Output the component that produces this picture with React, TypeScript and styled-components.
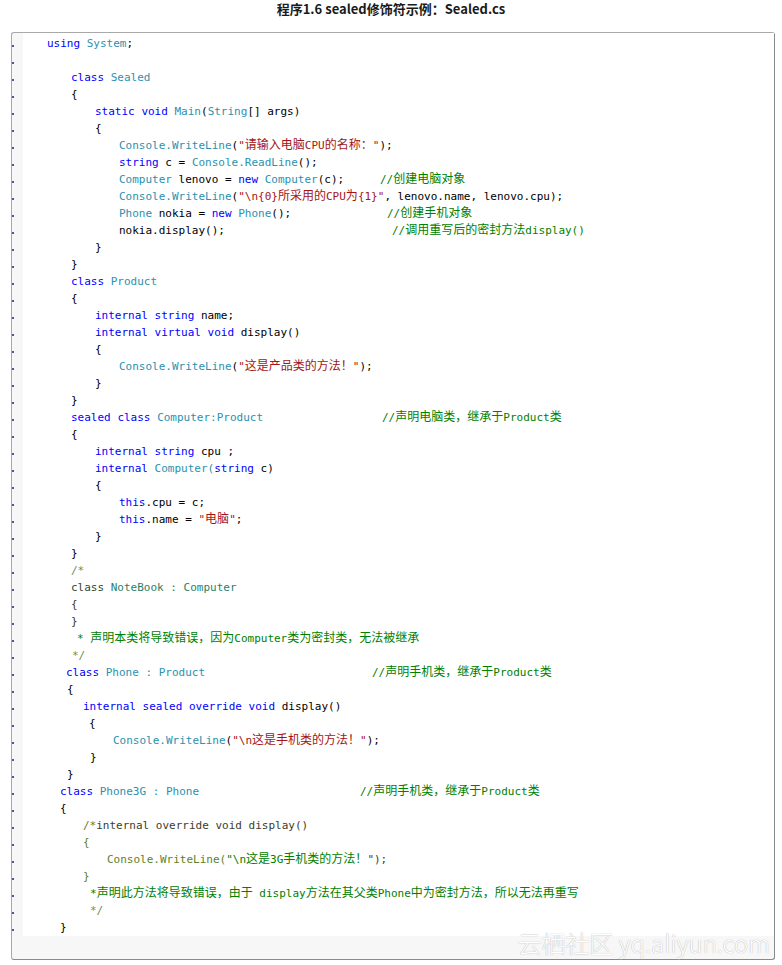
import React from "react";
import styled, { createGlobalStyle } from "styled-components";

const Global = createGlobalStyle`
  html, body { margin: 0; padding: 0; background: #ffffff; }
  body { font-family: "Noto Sans CJK SC", "Noto Sans", sans-serif; }
`;

type Kind = "kw" | "ty" | "st" | "cm" | "pl" | "ck" | "ct" | "cg" | "cd" | "co";

const COLORS: Record<Kind, string> = {
  kw: "#0000ff",
  ty: "#2b91af",
  st: "#a31515",
  cm: "#008000",
  pl: "#000000",
  ck: "#34452f",
  ct: "#2b7f66",
  cg: "#6f8f4f",
  cd: "#3c3c2c",
  co: "#5d7f2a",
};

type Tok = [string, Kind];
type LineDef = { i: number; t: Tok[]; c?: string; cx?: number };

const k = (s: string): Tok => [s, "kw"];
const t = (s: string): Tok => [s, "ty"];
const s = (x: string): Tok => [x, "st"];
const p = (x: string): Tok => [x, "pl"];
const g = (x: string): Tok => [x, "cm"];
const sp: Tok = [" ", "pl"];

const LINES: LineDef[] = [
  { i: 24, t: [k("using"), sp, t("System"), p(";")] },
  { i: 24, t: [] },
  { i: 48, t: [k("class"), sp, t("Sealed")] },
  { i: 48, t: [p("{")] },
  { i: 72, t: [k("static"), sp, k("void"), sp, t("Main"), p("("), t("String"), p("[] args)")] },
  { i: 72, t: [p("{")] },
  { i: 96, t: [t("Console.WriteLine"), p("("), s("\"请输入电脑CPU的名称：\""), p(");")] },
  { i: 96, t: [k("string"), p(" c = "), t("Console.ReadLine"), p("();")] },
  { i: 96, t: [t("Computer"), p(" lenovo = "), k("new"), sp, t("Computer"), p("(c);")], c: "//创建电脑对象", cx: 357 },
  { i: 96, t: [t("Console.WriteLine"), p("("), s("\"\\n{0}所采用的CPU为{1}\""), p(", lenovo.name, lenovo.cpu);")] },
  { i: 96, t: [t("Phone"), p(" nokia = "), k("new"), sp, t("Phone"), p("();")], c: "//创建手机对象", cx: 364 },
  { i: 96, t: [p("nokia.display();")], c: "//调用重写后的密封方法display()", cx: 369 },
  { i: 72, t: [p("}")] },
  { i: 48, t: [p("}")] },
  { i: 48, t: [k("class"), sp, t("Product")] },
  { i: 48, t: [p("{")] },
  { i: 72, t: [k("internal"), sp, k("string"), p(" name;")] },
  { i: 72, t: [k("internal"), sp, k("virtual"), sp, k("void"), p(" display()")] },
  { i: 72, t: [p("{")] },
  { i: 96, t: [t("Console.WriteLine"), p("("), s("\"这是产品类的方法！\""), p(");")] },
  { i: 72, t: [p("}")] },
  { i: 48, t: [p("}")] },
  { i: 48, t: [k("sealed"), sp, k("class"), sp, t("Computer:Product")], c: "//声明电脑类，继承于Product类", cx: 359 },
  { i: 48, t: [p("{")] },
  { i: 72, t: [k("internal"), sp, k("string"), p(" cpu ;")] },
  { i: 72, t: [k("internal"), sp, t("Computer("), k("string"), p(" c)")] },
  { i: 72, t: [p("{")] },
  { i: 96, t: [k("this"), p(".cpu = c;")] },
  { i: 96, t: [k("this"), p(".name = "), s("\"电脑\""), p(";")] },
  { i: 72, t: [p("}")] },
  { i: 48, t: [p("}")] },
  { i: 48, t: [["/*", "cg"]] },
  { i: 48, t: [["class", "ck"], [" NoteBook : Computer", "ct"]] },
  { i: 48, t: [["{", "cd"]] },
  { i: 48, t: [["}", "cd"]] },
  { i: 54, t: [g("* 声明本类将导致错误，因为Computer类为密封类，无法被继承")] },
  { i: 49, t: [["*/", "cg"]] },
  { i: 43, t: [k("class"), sp, t("Phone : Product")], c: "//声明手机类，继承于Product类", cx: 349 },
  { i: 44, t: [p("{")] },
  { i: 60, t: [k("internal"), sp, k("sealed"), sp, k("override"), sp, k("void"), p(" display()")] },
  { i: 66, t: [p("{")] },
  { i: 90, t: [t("Console.WriteLine"), p("("), s("\"\\n这是手机类的方法！\""), p(");")] },
  { i: 67, t: [p("}")] },
  { i: 44, t: [p("}")] },
  { i: 37, t: [k("class"), sp, t("Phone3G : Phone")], c: "//声明手机类，继承于Product类", cx: 337 },
  { i: 37, t: [p("{")] },
  { i: 60, t: [["/*", "co"], ["internal override void display()", "cd"]] },
  { i: 60, t: [["{", "co"]] },
  { i: 84, t: [["Console.WriteLine(", "co"], ["\"\\n这是3G手机类的方法！", "cm"], ["\");", "cd"]] },
  { i: 60, t: [["}", "co"]] },
  { i: 67, t: [g("*声明此方法将导致错误，由于 display方法在其父类Phone中为密封方法，所以无法再重写")] },
  { i: 67, t: [["*/", "cg"]] },
  { i: 37, t: [p("}")] },
];

const Page = styled.div`
  width: 782px;
`;

const Title = styled.h1`
  margin: 0 0 16px;
  padding-top: 1px;
  height: 15px;
  font-family: "Noto Sans CJK SC", "Noto Sans", sans-serif;
  font-size: 13px;
  line-height: 15px;
  font-weight: 700;
  color: #1a1a1a;
  text-align: center;
`;

const Box = styled.div`
  position: relative;
  margin-left: 11px;
  width: 764px;
  box-sizing: border-box;
  display: flex;
  padding-bottom: 23px;
  background: #f7f7f7;
  border: 1px solid #a9a9a9;
  border-right-color: #8a8a8a;
  border-bottom-color: #8a8a8a;
  border-radius: 3px;
`;

const Gutter = styled.div`
  width: 11px;
  flex-shrink: 0;
  padding-top: 2px;
  display: flex;
  flex-direction: column;
`;

const DotRow = styled.div`
  height: 17px;
  position: relative;
  &::after {
    content: "";
    position: absolute;
    left: 0;
    top: 10px;
    width: 2px;
    height: 2px;
    background: #4a5a8e;
  }
`;

const Panel = styled.div`
  flex: 1;
  background: #ffffff;
  padding-top: 2px;
`;

const Line = styled.div<{ $indent: number }>`
  height: 17px;
  padding-left: ${(pr) => pr.$indent}px;
  white-space: pre;
  font-family: "DejaVu Sans Mono", "Liberation Mono", monospace;
  font-size: 11px;
  line-height: 17px;
  display: flex;
  align-items: baseline;
`;

const Seg = styled.span<{ $w?: number }>`
  display: inline-block;
  flex-shrink: 0;
  height: 17px;
  ${(pr) => (pr.$w !== undefined ? `width: ${pr.$w}px;` : "")}
`;

const Tk = styled.span<{ $kind: Kind }>`
  color: ${(pr) => COLORS[pr.$kind]};
`;

const Han = styled.span`
  font-family: "Noto Sans CJK SC", sans-serif;
  font-size: 12px;
  line-height: 11px;
`;

const Watermark = styled.div`
  position: absolute;
  right: 4px;
  bottom: 1px;
  font-family: "Noto Sans CJK SC", "Liberation Sans", sans-serif;
  font-size: 24px;
  line-height: 30px;
  font-weight: 300;
  color: #ffffff;
  text-shadow: 0 0 1px #b8b8b8, 0 0 1px #c8c8c8;
  white-space: nowrap;
  pointer-events: none;
`;

const CJK = /([\u3000-\u303f\u4e00-\u9fff\uff00-\uffef]+)/;

function renderText(text: string) {
  return text.split(CJK).map((part, idx) =>
    part === "" ? null : CJK.test(part) ? <Han key={idx}>{part}</Han> : <React.Fragment key={idx}>{part}</React.Fragment>
  );
}

function CodeLine({ def }: { def: LineDef }) {
  const toks = def.t.map(([txt, kind], idx) => (
    <Tk key={idx} $kind={kind}>
      {renderText(txt)}
    </Tk>
  ));
  return (
    <Line $indent={def.i}>
      {def.c ? (
        <>
          <Seg $w={(def.cx ?? 0) - def.i}>{toks}</Seg>
          <Seg>
            <Tk $kind="cm">{renderText(def.c)}</Tk>
          </Seg>
        </>
      ) : (
        <Seg>{toks.length ? toks : " "}</Seg>
      )}
    </Line>
  );
}

export default function App() {
  return (
    <Page>
      <Global />
      <Title>程序1.6 sealed修饰符示例：Sealed.cs</Title>
      <Box>
        <Gutter>
          {LINES.map((_, idx) => (
            <DotRow key={idx} />
          ))}
        </Gutter>
        <Panel>
          {LINES.map((def, idx) => (
            <CodeLine key={idx} def={def} />
          ))}
        </Panel>
        <Watermark>云栖社区 yq.aliyun.com</Watermark>
      </Box>
    </Page>
  );
}
